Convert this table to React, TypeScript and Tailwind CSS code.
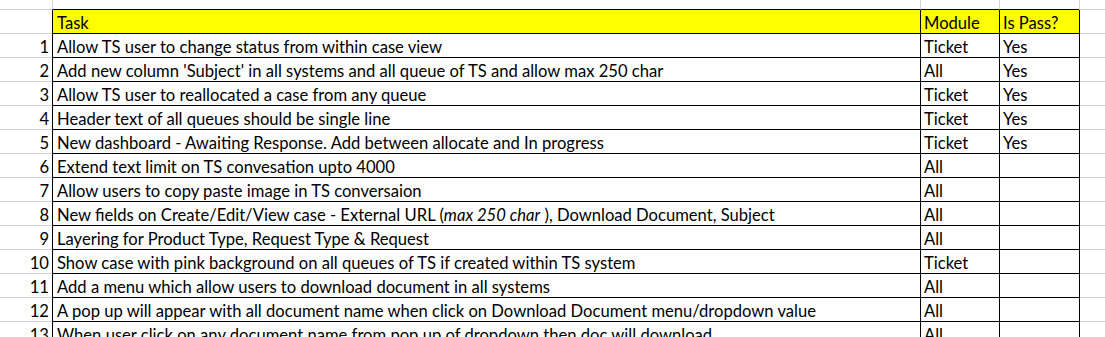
import React from 'react';

type Row = {
  task: React.ReactNode;
  module: string;
  pass?: string;
};

const rows: Row[] = [
  { task: 'Allow TS user to change status from within case view', module: 'Ticket', pass: 'Yes' },
  { task: "Add new column 'Subject' in all systems and all queue of TS and allow max 250 char", module: 'All', pass: 'Yes' },
  { task: 'Allow TS user to reallocated a case from any queue', module: 'Ticket', pass: 'Yes' },
  { task: 'Header text of all queues should be single line', module: 'Ticket', pass: 'Yes' },
  { task: 'New dashboard - Awaiting Response. Add between allocate and In progress', module: 'Ticket', pass: 'Yes' },
  { task: 'Extend text limit on TS convesation upto 4000', module: 'All' },
  { task: 'Allow users to copy paste image in TS conversaion', module: 'All' },
  {
    task: (
      <>
        New fields on Create/Edit/View case - External URL (<i>max 250 char</i> ), Download Document, Subject
      </>
    ),
    module: 'All',
  },
  { task: 'Layering for Product Type, Request Type & Request', module: 'All' },
  { task: 'Show case with pink background on all queues of TS if created within TS system', module: 'Ticket' },
  { task: 'Add a menu which allow users to download document in all systems', module: 'All' },
  { task: 'A pop up will appear with all document name when click on Download Document menu/dropdown value', module: 'All' },
  { task: 'When user click on any document name from pop up of dropdown then doc will download', module: 'All' },
];

const cell = 'h-full overflow-hidden whitespace-nowrap leading-[24px] pt-[1px]';

export default function App() {
  return (
    <div className="w-[1105px] h-[337px] overflow-hidden bg-white text-black text-[16.6px] font-['Lato','Liberation_Sans',sans-serif]">
      {/* top blank row */}
      <div className="flex h-[10px]">
        <div className="w-[52px] shrink-0 border-b border-[#d4d4d4]" />
        <div className="w-[868px] shrink-0 border-l border-b border-l-[#d4d4d4] border-b-black" />
        <div className="w-[79px] shrink-0 border-l border-b border-l-[#d4d4d4] border-b-black" />
        <div className="w-[80px] shrink-0 border-l border-b border-l-[#d4d4d4] border-b-black" />
        <div className="flex-1 border-l border-b border-[#d4d4d4]" />
      </div>

      {/* header */}
      <div className="flex h-[24px]">
        <div className="w-[52px] shrink-0 border-b border-[#d4d4d4]" />
        <div className={`${cell} w-[868px] shrink-0 border-l border-b border-black bg-[#ffff00] pl-[4px]`}>Task</div>
        <div className={`${cell} w-[79px] shrink-0 border-l border-b border-black bg-[#ffff00] pl-[3px]`}>Module</div>
        <div className={`${cell} w-[81px] shrink-0 border-x border-b border-black bg-[#ffff00] pl-[3px]`}>Is Pass?</div>
        <div className="flex-1 border-b border-[#d4d4d4]" />
      </div>

      {rows.map((r, i) => (
        <div key={i} className="flex h-[24px]">
          <div className={`${cell} w-[52px] shrink-0 border-b border-[#d4d4d4] text-right pr-[3px]`}>{i + 1}</div>
          <div className={`${cell} w-[868px] shrink-0 border-l border-b border-black pl-[4px]`}>{r.task}</div>
          <div className={`${cell} w-[79px] shrink-0 border-l border-b border-black pl-[3px]`}>{r.module}</div>
          <div className={`${cell} w-[81px] shrink-0 border-x border-b border-black pl-[3px]`}>{r.pass}</div>
          <div className="flex-1 border-b border-[#d4d4d4]" />
        </div>
      ))}
    </div>
  );
}
